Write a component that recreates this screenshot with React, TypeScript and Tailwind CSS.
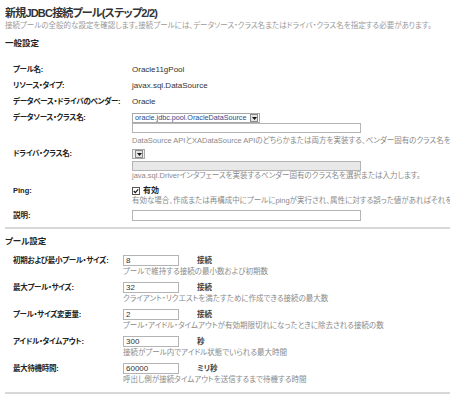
import React from "react";

function DropButton() {
  return (
    <span className="flex h-[8px] w-[8px] shrink-0 items-center justify-center border border-[#8a8a8a] bg-[#e4e4e4]">
      <svg width="5" height="3" viewBox="0 0 5 3">
        <path d="M0 0h5L2.5 3z" fill="#111" />
      </svg>
    </span>
  );
}

function GeneralRow({ label, value }: { label: string; value: string }) {
  return (
    <div className="flex h-[16px] items-center">
      <div className="w-[132px] shrink-0 pl-[13px] text-[7.5px] font-bold tracking-[-0.3px] text-[#222]">{label}</div>
      <div className="text-[8px] text-[#333]">{value}</div>
    </div>
  );
}

function PoolRow({
  label,
  value,
  unit,
  desc,
  first,
}: {
  label: string;
  value: string;
  unit: string;
  desc: string;
  first?: boolean;
}) {
  return (
    <div className={first ? "mt-[8px] flex" : "mt-[5px] flex"}>
      <div className="flex h-[11px] w-[123px] shrink-0 items-center pl-[13px] text-[7.5px] font-bold tracking-[-0.3px] text-[#222]">
        {label}
      </div>
      <div className="flex flex-col">
        <div className="flex h-[11px] items-center">
          <div className="flex h-[11px] w-[56px] items-center border border-[#b4b4b4] pl-[2px] text-[8px] text-[#333]">
            {value}
          </div>
          <span className="ml-[18px] text-[7.5px] font-bold text-[#444]">{unit}</span>
        </div>
        <div className="whitespace-nowrap text-[7.5px] leading-[11px] text-[#8a8a8a]">{desc}</div>
      </div>
    </div>
  );
}

export default function App() {
  return (
    <div className="h-[394px] w-[450px] overflow-hidden whitespace-nowrap bg-white pt-[6px] font-['Liberation_Sans','Noto_Sans_CJK_JP',sans-serif] text-[#333] [font-feature-settings:'palt']">
      {/* Header */}
      <h1 className="pl-[5px] text-[11px] font-bold leading-[15px] tracking-[-0.8px] text-[#333]">
        新規JDBC接続プール(ステップ2/2)
      </h1>
      <p className="pl-[5px] text-[7.5px] leading-[10px] text-[#9a9a9a]">
        接続プールの全般的な設定を確認します。接続プールには、データソース・クラス名またはドライバ・クラス名を指定する必要があります。
      </p>

      {/* General settings */}
      <h2 className="mt-[6px] pl-[5px] text-[8.5px] font-bold leading-[12px] text-[#222]">一般設定</h2>
      <div className="mt-[13px]">
        <GeneralRow label="プール名:" value="Oracle11gPool" />
        <GeneralRow label="リソース・タイプ:" value="javax.sql.DataSource" />
        <GeneralRow label="データベース・ドライバのベンダー:" value="Oracle" />
      </div>

      <div className="mt-[3px] flex">
        <div className="flex h-[10px] w-[132px] shrink-0 items-center pl-[13px] text-[7.5px] font-bold tracking-[-0.3px] text-[#222]">
          データソース・クラス名:
        </div>
        <div className="flex flex-col">
          <div className="flex h-[10px] w-[128px] items-center justify-between border border-[#a8a8a8] pl-[2px] pr-[1px]">
            <span className="text-[7.2px] text-[#2b4a8c]">oracle.jdbc.pool.OracleDataSource</span>
            <DropButton />
          </div>
          <div className="h-[10px] w-[229px] border border-[#b4b4b4] bg-white" />
          <div className="mt-[3px] text-[7.5px] leading-[10px] text-[#8a8a8a]">
            DataSource APIとXADataSource APIのどちらかまたは両方を実装する、ベンダー固有のクラス名を選択または入力します。
          </div>
        </div>
      </div>

      <div className="mt-[3px] flex">
        <div className="flex h-[10px] w-[132px] shrink-0 items-center pl-[13px] text-[7.5px] font-bold tracking-[-0.3px] text-[#222]">
          ドライバ・クラス名:
        </div>
        <div className="flex flex-col">
          <div className="flex h-[10px] w-[13px] items-center justify-end border border-[#a8a8a8] bg-[#eeeeee] pr-[1px]">
            <DropButton />
          </div>
          <div className="mt-[2px] h-[10px] w-[229px] border border-[#b4b4b4] bg-[#e8e8e8]" />
          <div className="text-[7.5px] leading-[10px] text-[#8a8a8a]">
            java.sql.Driverインタフェースを実装するベンダー固有のクラス名を選択または入力します。
          </div>
        </div>
      </div>

      <div className="mt-[5px] flex">
        <div className="flex h-[10px] w-[132px] shrink-0 items-center pl-[13px] text-[7.5px] font-bold text-[#222]">
          Ping:
        </div>
        <div className="flex flex-col">
          <div className="flex h-[10px] items-center gap-[3px]">
            <svg width="8" height="8" viewBox="0 0 8 8">
              <rect x="0.5" y="0.5" width="7" height="7" fill="#fff" stroke="#555" />
              <path d="M1.8 4l1.5 1.6L6.2 2.4" fill="none" stroke="#111" strokeWidth="1.1" />
            </svg>
            <span className="text-[8px] font-bold text-[#222]">有効</span>
          </div>
          <div className="text-[7.5px] leading-[10px] text-[#8a8a8a]">
            有効な場合、作成または再構成中にプールにpingが実行され、属性に対する誤った値があればそれを識別します。
          </div>
        </div>
      </div>

      <div className="mt-[4px] flex">
        <div className="flex h-[11px] w-[132px] shrink-0 items-center pl-[13px] text-[7.5px] font-bold text-[#222]">
          説明:
        </div>
        <div className="h-[11px] w-[229px] border border-[#b4b4b4] bg-white" />
      </div>

      <div className="ml-[5px] mt-[6px] h-[2px] bg-[#d8d8d8]" />

      {/* Pool settings */}
      <h2 className="mt-[6px] pl-[5px] text-[8.5px] font-bold leading-[12px] text-[#222]">プール設定</h2>
      <PoolRow
        first
        label="初期および最小プール・サイズ:"
        value="8"
        unit="接続"
        desc="プールで維持する接続の最小数および初期数"
      />
      <PoolRow
        label="最大プール・サイズ:"
        value="32"
        unit="接続"
        desc="クライアント・リクエストを満たすために作成できる接続の最大数"
      />
      <PoolRow
        label="プール・サイズ変更量:"
        value="2"
        unit="接続"
        desc="プール・アイドル・タイムアウトが有効期限切れになったときに除去される接続の数"
      />
      <PoolRow
        label="アイドル・タイムアウト:"
        value="300"
        unit="秒"
        desc="接続がプール内でアイドル状態でいられる最大時間"
      />
      <PoolRow
        label="最大待機時間:"
        value="60000"
        unit="ミリ秒"
        desc="呼出し側が接続タイムアウトを送信するまで待機する時間"
      />

      <div className="ml-[5px] mt-[7px] h-[2px] bg-[#d8d8d8]" />
    </div>
  );
}
